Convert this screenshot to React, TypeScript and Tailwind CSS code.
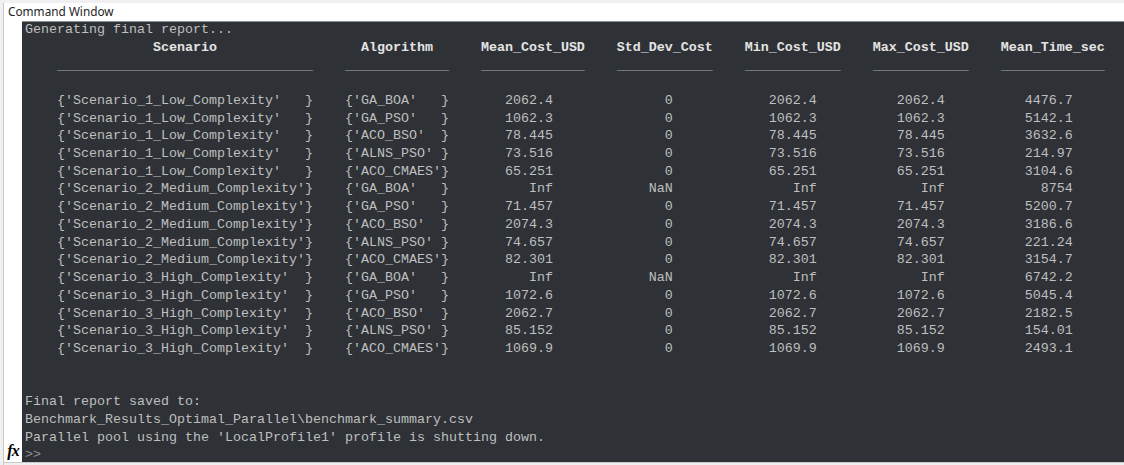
import React from "react";

type Row = [string, string, string, string, string, string, string];

const rows: Row[] = [
  ["{'Scenario_1_Low_Complexity'   }", "{'GA_BOA'   }", "2062.4", "0", "2062.4", "2062.4", "4476.7"],
  ["{'Scenario_1_Low_Complexity'   }", "{'GA_PSO'   }", "1062.3", "0", "1062.3", "1062.3", "5142.1"],
  ["{'Scenario_1_Low_Complexity'   }", "{'ACO_BSO'  }", "78.445", "0", "78.445", "78.445", "3632.6"],
  ["{'Scenario_1_Low_Complexity'   }", "{'ALNS_PSO' }", "73.516", "0", "73.516", "73.516", "214.97"],
  ["{'Scenario_1_Low_Complexity'   }", "{'ACO_CMAES'}", "65.251", "0", "65.251", "65.251", "3104.6"],
  ["{'Scenario_2_Medium_Complexity'}", "{'GA_BOA'   }", "Inf", "NaN", "Inf", "Inf", "8754"],
  ["{'Scenario_2_Medium_Complexity'}", "{'GA_PSO'   }", "71.457", "0", "71.457", "71.457", "5200.7"],
  ["{'Scenario_2_Medium_Complexity'}", "{'ACO_BSO'  }", "2074.3", "0", "2074.3", "2074.3", "3186.6"],
  ["{'Scenario_2_Medium_Complexity'}", "{'ALNS_PSO' }", "74.657", "0", "74.657", "74.657", "221.24"],
  ["{'Scenario_2_Medium_Complexity'}", "{'ACO_CMAES'}", "82.301", "0", "82.301", "82.301", "3154.7"],
  ["{'Scenario_3_High_Complexity'  }", "{'GA_BOA'   }", "Inf", "NaN", "Inf", "Inf", "6742.2"],
  ["{'Scenario_3_High_Complexity'  }", "{'GA_PSO'   }", "1072.6", "0", "1072.6", "1072.6", "5045.4"],
  ["{'Scenario_3_High_Complexity'  }", "{'ACO_BSO'  }", "2062.7", "0", "2062.7", "2062.7", "2182.5"],
  ["{'Scenario_3_High_Complexity'  }", "{'ALNS_PSO' }", "85.152", "0", "85.152", "85.152", "154.01"],
  ["{'Scenario_3_High_Complexity'  }", "{'ACO_CMAES'}", "1069.9", "0", "1069.9", "1069.9", "2493.1"],
];

const sp = (n: number) => " ".repeat(n);
const rp = (s: string, w: number) => sp(Math.max(0, w - s.length)) + s;
const fixScen = (s: string) => {
  const core = s.replace(/\s*\}$/, "");
  return core + sp(32 - core.length - 1) + "}";
};

const fmtRow = (r: Row) =>
  sp(4) +
  fixScen(r[0]) +
  sp(4) +
  r[1] +
  sp(4) +
  rp(r[2], 9) +
  sp(8) +
  rp(r[3], 7) +
  sp(9) +
  rp(r[4], 9) +
  sp(7) +
  rp(r[5], 9) +
  sp(7) +
  rp(r[6], 9);

const header =
  sp(16) +
  "Scenario" +
  sp(18) +
  "Algorithm" +
  sp(6) +
  "Mean_Cost_USD" +
  sp(4) +
  "Std_Dev_Cost" +
  sp(4) +
  "Min_Cost_USD" +
  sp(4) +
  "Max_Cost_USD" +
  sp(4) +
  "Mean_Time_sec";

const under =
  sp(4) +
  "_".repeat(32) +
  sp(4) +
  "_".repeat(13) +
  sp(4) +
  "_".repeat(13) +
  sp(4) +
  "_".repeat(12) +
  sp(4) +
  "_".repeat(12) +
  sp(4) +
  "_".repeat(12) +
  sp(4) +
  "_".repeat(13);

const mono = "'Courier New', 'Nimbus Mono PS', 'Nimbus Mono L', 'FreeMono', 'Liberation Mono', monospace";

export default function App() {
  return (
    <div
      className="w-[1124px] h-[465px] bg-[#f0f0f0] overflow-hidden flex flex-col"
      style={{ fontFamily: "'Noto Sans', 'Open Sans', sans-serif" }}
    >
      <div className="h-[3px] shrink-0 bg-[#f0f0f0]" />
      <div className="ml-[3px] flex-1 flex flex-col bg-white border-l border-[#c9c9c9] min-h-0">
        <div className="h-[18px] shrink-0 flex items-center pl-[4px] text-[11.8px] text-[#1e1e1e] leading-none">
          Command Window
        </div>
        <div className="flex flex-1 min-h-0">
          <div className="w-[18px] shrink-0 flex flex-col justify-end items-center pb-[3px]">
            <span
              className="italic font-bold text-[16px] leading-none text-black tracking-[-1px]"
              style={{ fontFamily: "'Liberation Serif', 'DejaVu Serif', serif" }}
            >
              fx
            </span>
          </div>
          <div className="flex-1 bg-[#2e3236] border-t border-[#8c8f91] overflow-hidden">
            <div
              className="whitespace-pre text-[13.33px] leading-[17.72px] text-[#bfbfbf] pl-[3px] -mt-[1px]"
              style={{ fontFamily: mono }}
            >
              <div>Generating final report...</div>
              <div className="font-bold text-[#e4e4e4]">{header}</div>
              <div className="text-[#a8a8a8] translate-y-[1px]">{under}</div>
              <div>{" "}</div>
              {rows.map((r, i) => (
                <div key={i}>{fmtRow(r)}</div>
              ))}
              <div>{" "}</div>
              <div>{" "}</div>
              <div>Final report saved to:</div>
              <div>Benchmark_Results_Optimal_Parallel\benchmark_summary.csv</div>
              <div>Parallel pool using the 'LocalProfile1' profile is shutting down.</div>
              <div className="text-[#8a8d90]">{">>"}</div>
            </div>
          </div>
        </div>
        <div className="h-[3px] shrink-0 bg-[#f0f0f0] border-t border-[#c9c9c9]" />
      </div>
    </div>
  );
}
